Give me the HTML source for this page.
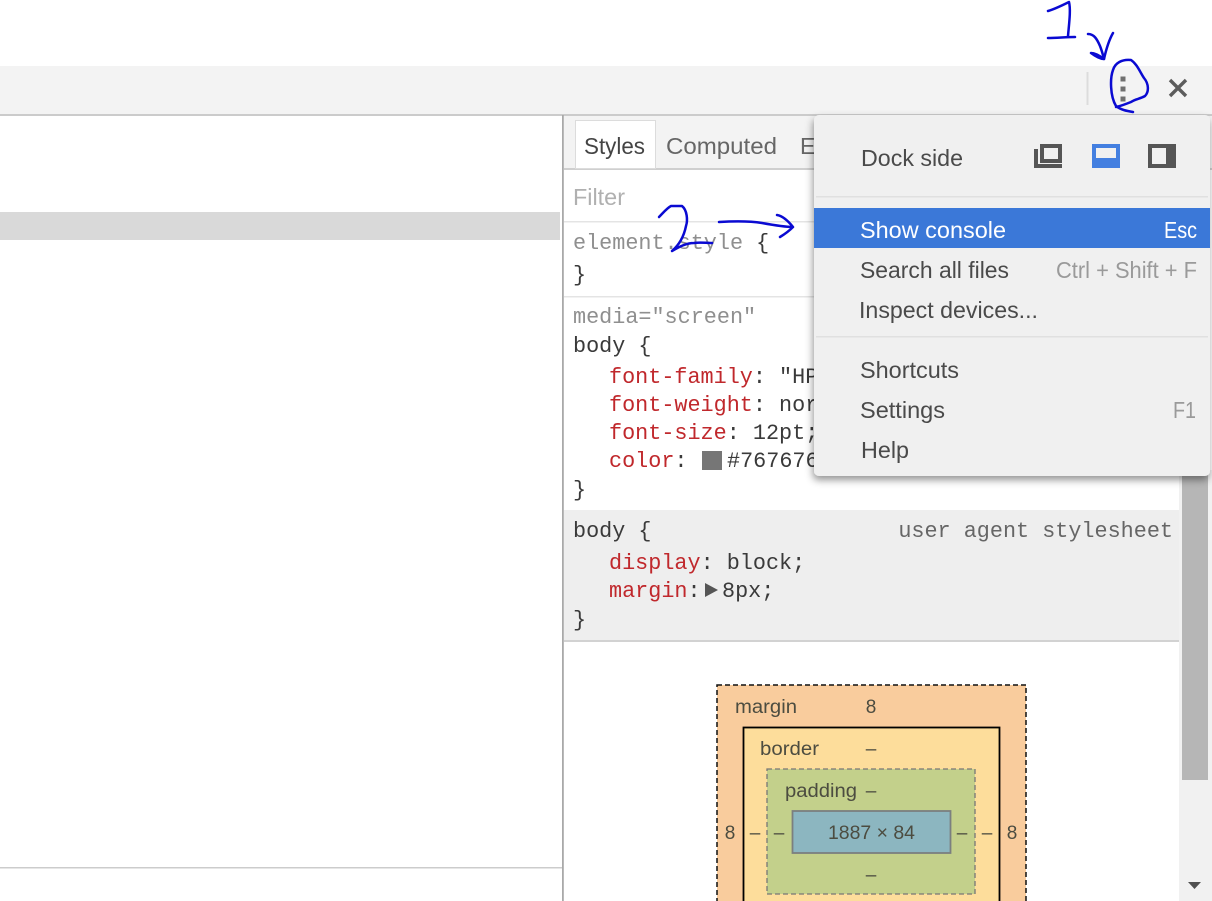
<!DOCTYPE html>
<html>
<head>
<meta charset="utf-8">
<style>
html,body{margin:0;padding:0;background:#fff;width:1212px;height:901px;overflow:hidden}
svg{display:block;position:absolute;left:0;top:0;filter:blur(.35px)}
.m{font-family:"Liberation Mono",monospace;font-size:21.8px;fill:#3a3a3a}
.r{fill:#c0282c}
.g{fill:#8f8f8f}
.s{font-family:"Liberation Sans",sans-serif;font-size:23px;fill:#4a4a4a}
.b{font-family:"Liberation Sans",sans-serif;font-size:19px;fill:#4c4c40}
.h{fill:none;stroke:#0a0ad2;stroke-width:2.5;stroke-linecap:round;stroke-linejoin:round}
</style>
</head>
<body>
<svg width="1212" height="901" viewBox="0 0 1212 901" xmlns="http://www.w3.org/2000/svg">
<defs>
<filter id="sh" x="-10%" y="-10%" width="120%" height="120%"><feDropShadow dx="-1" dy="4" stdDeviation="4" flood-color="#000" flood-opacity=".42"/></filter>
</defs>
<rect width="1212" height="901" fill="#fff"/>

<!-- toolbar -->
<rect x="0" y="66" width="1212" height="48" fill="#f3f3f3"/>
<rect x="0" y="114" width="1212" height="2" fill="#cbcbcb"/>
<rect x="1086.500" y="72" width="2" height="33" fill="#dcdcdc"/>
<rect x="1120.500" y="76.500" width="5" height="5" fill="#707070"/>
<rect x="1120.500" y="86.500" width="5" height="5" fill="#707070"/>
<rect x="1120.500" y="96.500" width="5" height="5" fill="#707070"/>
<path d="M1170 80L1186 96M1186 80L1170 96" stroke="#5c5c5c" stroke-width="3.4" fill="none"/>

<!-- left panel -->
<rect x="0" y="212" width="560" height="28" fill="#d9d9d9"/>
<rect x="0" y="867" width="563" height="1.500" fill="#cccccc"/>
<rect x="562" y="115" width="1.800" height="786" fill="#a9a9a9"/>

<!-- sidebar tabs -->
<rect x="564" y="116" width="648" height="52" fill="#f3f3f3"/>
<rect x="564" y="168" width="648" height="2" fill="#cfcfcf"/>
<rect x="575.500" y="120.500" width="80" height="48" fill="#fff" stroke="#dcdcdc"/>
<text class="s" x="584" y="154" textLength="61" lengthAdjust="spacingAndGlyphs" style="fill:#444">Styles</text>
<text class="s" x="666" y="154" textLength="111" lengthAdjust="spacingAndGlyphs" style="fill:#666">Computed</text>
<text class="s" x="800" y="154" style="fill:#666">E</text>
<text class="s" x="573" y="205" textLength="52" lengthAdjust="spacingAndGlyphs" style="fill:#b0b0b0">Filter</text>
<rect x="564" y="221" width="615" height="1.500" fill="#e4e4e4"/>

<text class="m g" x="573" y="249">element.style <tspan fill="#3a3a3a">{</tspan></text>
<text class="m" x="573" y="281">}</text>
<rect x="564" y="296" width="615" height="1.500" fill="#e4e4e4"/>
<text class="m g" x="573" y="323">media="screen"</text>
<text class="m" x="573" y="352">body {</text>
<text class="m" x="609" y="383"><tspan class="r">font-family</tspan>: "HP</text>
<text class="m" x="609" y="411"><tspan class="r">font-weight</tspan>: normal;</text>
<text class="m" x="609" y="439"><tspan class="r">font-size</tspan>: 12pt;</text>
<text class="m" x="609" y="467"><tspan class="r">color</tspan>:</text>
<rect x="702" y="451" width="20" height="19" fill="#767676"/>
<text class="m" x="727" y="467">#767676;</text>
<text class="m" x="573" y="496">}</text>

<rect x="564" y="510" width="615" height="130" fill="#eeeeee"/>
<rect x="564" y="640" width="615" height="2" fill="#d2d2d2"/>
<text class="m" x="573" y="537">body {</text>
<text class="m" x="1173" y="537" text-anchor="end" style="fill:#666">user agent stylesheet</text>
<text class="m" x="609" y="569"><tspan class="r">display</tspan>: block;</text>
<text class="m" x="609" y="597"><tspan class="r">margin</tspan>:</text>
<path d="M705 583L718 590L705 597Z" fill="#555"/>
<text class="m" x="722" y="597">8px;</text>
<text class="m" x="573" y="626">}</text>

<!-- scrollbar -->
<rect x="1179" y="470" width="33" height="431" fill="#f1f1f1"/>
<rect x="1182" y="470" width="26" height="310" fill="#b6b6b6"/>
<path d="M1188 882L1201 882L1194.500 889Z" fill="#505050"/>

<!-- box model -->
<rect x="717" y="685" width="309" height="240" fill="#f9cc9d" stroke="#111" stroke-width="1.500" stroke-dasharray="5 3"/>
<rect x="743.500" y="727.500" width="256" height="200" fill="#fddd9b" stroke="#000" stroke-width="1.800"/>
<rect x="767" y="769" width="208" height="125" fill="#c3d08b" stroke="#777" stroke-width="1.300" stroke-dasharray="5 3"/>
<rect x="792.500" y="811" width="158" height="42" fill="#8cb6c0" stroke="#7b7f7f" stroke-width="1.800"/>
<text class="b" x="735" y="713" textLength="62" lengthAdjust="spacingAndGlyphs">margin</text>
<text class="b" x="871" y="713" text-anchor="middle">8</text>
<text class="b" x="760" y="755" textLength="59" lengthAdjust="spacingAndGlyphs">border</text>
<text class="b" x="871" y="755" text-anchor="middle">–</text>
<text class="b" x="785" y="797" textLength="72" lengthAdjust="spacingAndGlyphs">padding</text>
<text class="b" x="871" y="797" text-anchor="middle">–</text>
<text class="b" x="828" y="839" textLength="87" lengthAdjust="spacingAndGlyphs">1887 × 84</text>
<text class="b" x="730" y="839" text-anchor="middle">8</text>
<text class="b" x="755" y="839" text-anchor="middle">–</text>
<text class="b" x="779" y="839" text-anchor="middle">–</text>
<text class="b" x="962" y="839" text-anchor="middle">–</text>
<text class="b" x="987" y="839" text-anchor="middle">–</text>
<text class="b" x="1012" y="839" text-anchor="middle">8</text>
<text class="b" x="871" y="881" text-anchor="middle">–</text>

<!-- menu -->
<rect x="814" y="115" width="396" height="361" rx="5" fill="#f0f0f0" filter="url(#sh)"/>
<text class="s" x="861" y="166" textLength="102" lengthAdjust="spacingAndGlyphs">Dock side</text>
<!-- dock icons -->
<path fill-rule="evenodd" d="M1040 144H1062V163H1040ZM1044 148V159H1058V148Z" fill="#555"/>
<path d="M1034 149H1038V164H1062V168H1034Z" fill="#555"/>
<path fill-rule="evenodd" d="M1092 144H1120V168H1092ZM1096 148V158H1116V148Z" fill="#437fe0"/>
<path fill-rule="evenodd" d="M1148 144H1176V168H1148ZM1152 148V164H1166V148Z" fill="#555"/>
<rect x="816" y="196" width="392" height="1.500" fill="#e0e0e0"/>
<rect x="814" y="208" width="396" height="40" fill="#3b78d8"/>
<text class="s" x="860" y="238" textLength="146" lengthAdjust="spacingAndGlyphs" style="fill:#fff">Show console</text>
<text class="s" x="1164" y="238" textLength="33" lengthAdjust="spacingAndGlyphs" style="fill:#fff">Esc</text>
<text class="s" x="860" y="278" textLength="149" lengthAdjust="spacingAndGlyphs">Search all files</text>
<text class="s" x="1056" y="278" textLength="141" lengthAdjust="spacingAndGlyphs" style="fill:#9a9a9a">Ctrl + Shift + F</text>
<text class="s" x="859" y="318" textLength="179" lengthAdjust="spacingAndGlyphs">Inspect devices...</text>
<rect x="816" y="336" width="392" height="1.500" fill="#e0e0e0"/>
<text class="s" x="860" y="378" textLength="99" lengthAdjust="spacingAndGlyphs">Shortcuts</text>
<text class="s" x="860" y="418" textLength="85" lengthAdjust="spacingAndGlyphs">Settings</text>
<text class="s" x="1173" y="418" textLength="23" lengthAdjust="spacingAndGlyphs" style="fill:#9a9a9a">F1</text>
<text class="s" x="861" y="458" textLength="48" lengthAdjust="spacingAndGlyphs">Help</text>

<!-- handwriting -->
<path class="h" d="M1048 11C1055 9 1063 5 1069 2C1071 10 1069 24 1068 36"/>
<path class="h" d="M1048 38C1057 38 1066 37 1075 37"/>
<path class="h" d="M1088 34C1094 34 1097 39 1100 46C1102 51 1103 55 1104 59C1106 50 1109 40 1113 33"/>
<path class="h" d="M1091 53C1095 53 1100 56 1104 59C1100 59 1095 56 1091 53Z"/>
<path class="h" d="M1133 112C1127 111 1121 110 1116 106C1110 96 1110 78 1113 70C1115 63 1122 59 1131 60C1137 64 1140 72 1144 78C1149 84 1149 92 1145 96C1140 99 1135 99 1131 102C1126 104 1121 106 1116 107"/>
<path class="h" d="M659 217C663 213 667 208 671 206H682C687 210 688 220 686 226C684 236 679 245 672 251C679 247 686 243 694 243C700 242 706 243 712 243"/>
<path class="h" d="M719 222C735 221 750 221 762 223C773 225 784 227 793 227C789 222 783 216 777 215M793 227C789 231 785 234 780 237"/>
</svg>
</body>
</html>
